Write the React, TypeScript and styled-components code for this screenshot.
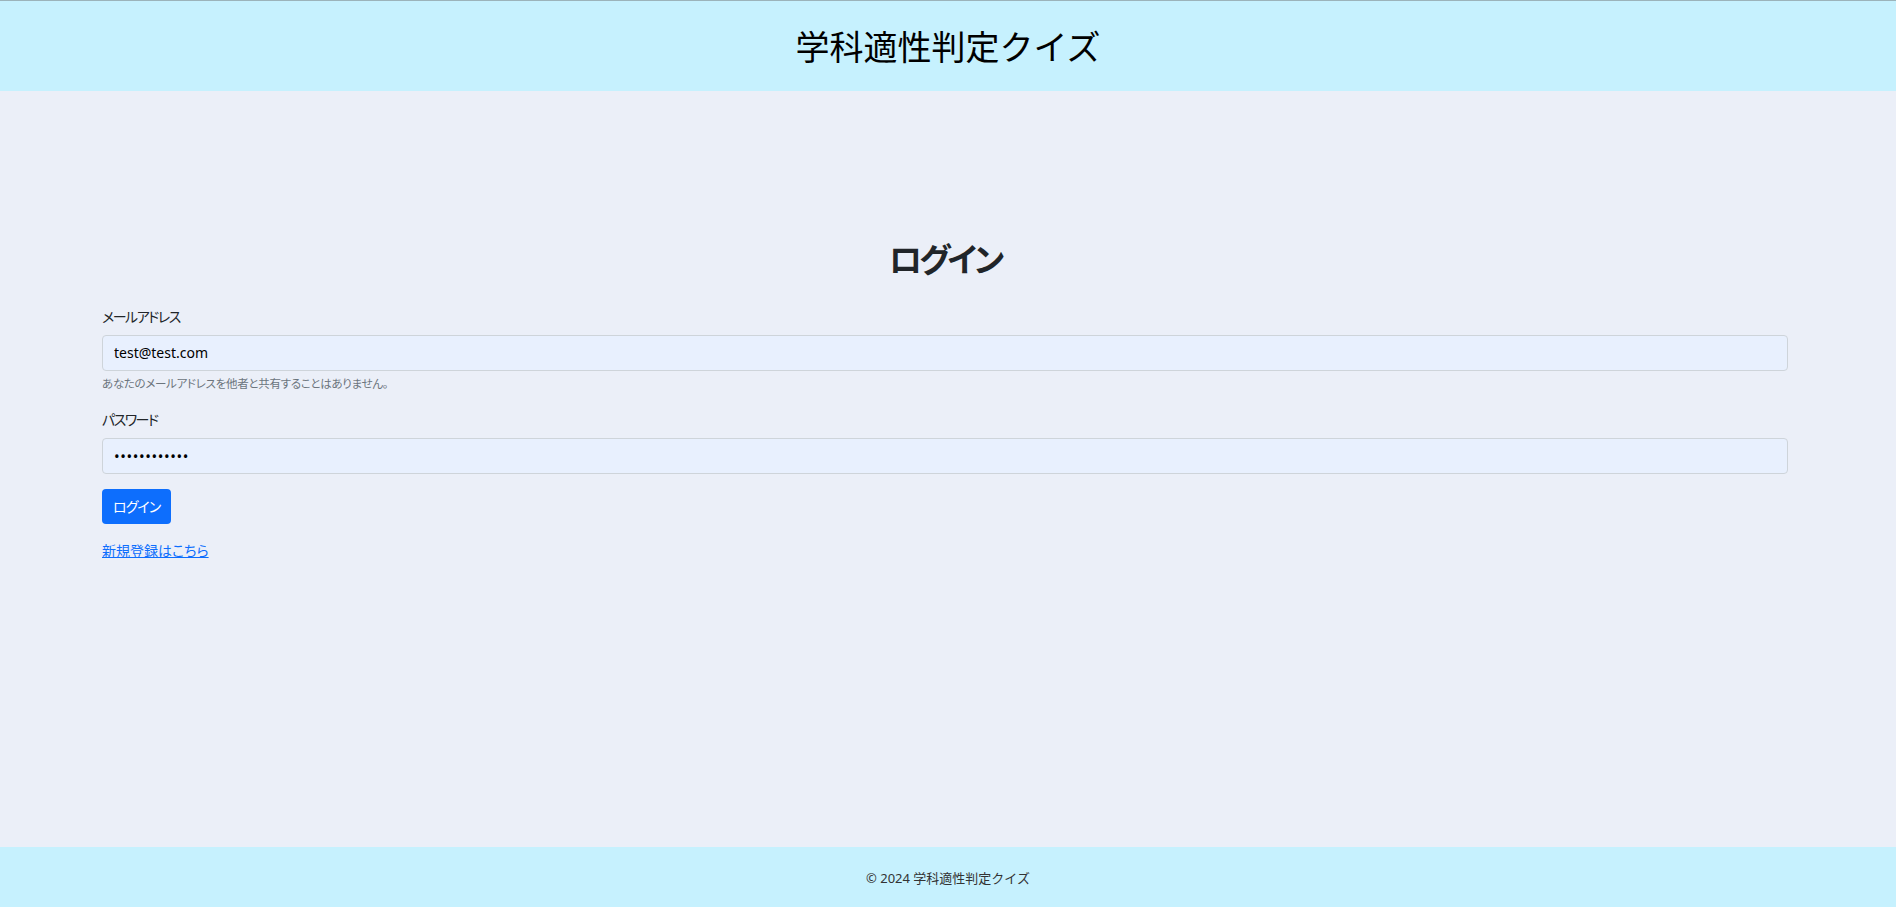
import React from "react";
import styled, { createGlobalStyle } from "styled-components";

const GlobalStyle = createGlobalStyle`
  html, body {
    margin: 0;
    padding: 0;
  }
  body {
    background: #ebeff8;
    font-family: "Noto Sans", "Noto Sans CJK JP", sans-serif;
    color: #212529;
  }
  * { box-sizing: border-box; }
`;

const Page = styled.div`
  min-height: 100vh;
  display: flex;
  flex-direction: column;
`;

const Header = styled.header`
  height: 91px;
  border-top: 1px solid #9bb3ba;
  background: #c6f1fe;
  display: flex;
  align-items: center;
  justify-content: center;
`;

const SiteTitle = styled.h1`
  margin: 0;
  font-family: "Noto Sans CJK JP", sans-serif;
  font-size: 34px;
  font-weight: 400;
  color: #000;
  line-height: 1;
`;

const Main = styled.main`
  flex: 1;
  padding: 148px 108px 0 102px;
`;

const Heading = styled.h2`
  margin: 0 0 27px;
  text-align: center;
  font-family: "Noto Sans CJK JP", sans-serif;
  font-feature-settings: "palt";
  font-size: 33px;
  font-weight: 700;
  line-height: 1.2;
  letter-spacing: -3px;
  color: #212529;
`;

const Field = styled.div<{ $gap?: number }>`
  display: flex;
  flex-direction: column;
  margin-bottom: ${(p) => p.$gap ?? 0}px;
`;

const Label = styled.label`
  font-family: "Noto Sans CJK JP", sans-serif;
  font-feature-settings: "palt";
  font-size: 14px;
  line-height: 20px;
  letter-spacing: -1.5px;
  color: #212529;
  margin-bottom: 9px;
`;

const Input = styled.input<{ $secret?: boolean }>`
  height: 36px;
  width: 100%;
  padding: 0 11px;
  border: 1px solid #ced4da;
  border-radius: 4px;
  background: #e8f0fe;
  font-family: "Noto Sans", "Noto Sans CJK JP", sans-serif;
  font-size: ${(p) => (p.$secret ? 15 : 14)}px;
  letter-spacing: ${(p) => (p.$secret ? 0.6 : 0)}px;
  color: #000;
  outline: none;
`;

const Help = styled.div`
  font-family: "Noto Sans CJK JP", sans-serif;
  font-feature-settings: "palt";
  font-size: 11.5px;
  line-height: 16px;
  letter-spacing: -0.3px;
  color: #6c757d;
  margin-top: 4px;
`;

const Button = styled.button`
  align-self: flex-start;
  height: 35px;
  padding: 0 11px;
  border: none;
  border-radius: 4px;
  background: #0d6efd;
  color: #fff;
  font-family: "Noto Sans CJK JP", sans-serif;
  font-feature-settings: "palt";
  font-size: 14px;
  letter-spacing: -1px;
  cursor: pointer;
`;

const Actions = styled.div`
  display: flex;
  flex-direction: column;
  gap: 16px;
  margin-top: 15px;
`;

const Link = styled.a`
  align-self: flex-start;
  color: #0d6efd;
  text-decoration: underline;
  font-family: "Noto Sans CJK JP", sans-serif;
  font-feature-settings: "palt";
  font-size: 14px;
  line-height: 20px;
`;

const Footer = styled.footer`
  height: 60px;
  background: #c6f1fe;
  display: flex;
  align-items: center;
  justify-content: center;
  font-family: "Noto Sans", "Noto Sans CJK JP", sans-serif;
  font-size: 13px;
  color: #333;
`;

export default function App() {
  return (
    <Page>
      <GlobalStyle />
      <Header>
        <SiteTitle>学科適性判定クイズ</SiteTitle>
      </Header>
      <Main>
        <Heading>ログイン</Heading>
        <form onSubmit={(e) => e.preventDefault()}>
          <Field $gap={18}>
            <Label htmlFor="email">メールアドレス</Label>
            <Input id="email" type="email" defaultValue="test@test.com" />
            <Help>あなたのメールアドレスを他者と共有することはありません。</Help>
          </Field>
          <Field>
            <Label htmlFor="password">パスワード</Label>
            <Input id="password" type="password" $secret defaultValue="testpassword" />
          </Field>
          <Actions>
            <Button type="submit">ログイン</Button>
            <Link href="#">新規登録はこちら</Link>
          </Actions>
        </form>
      </Main>
      <Footer>© 2024 学科適性判定クイズ</Footer>
    </Page>
  );
}
